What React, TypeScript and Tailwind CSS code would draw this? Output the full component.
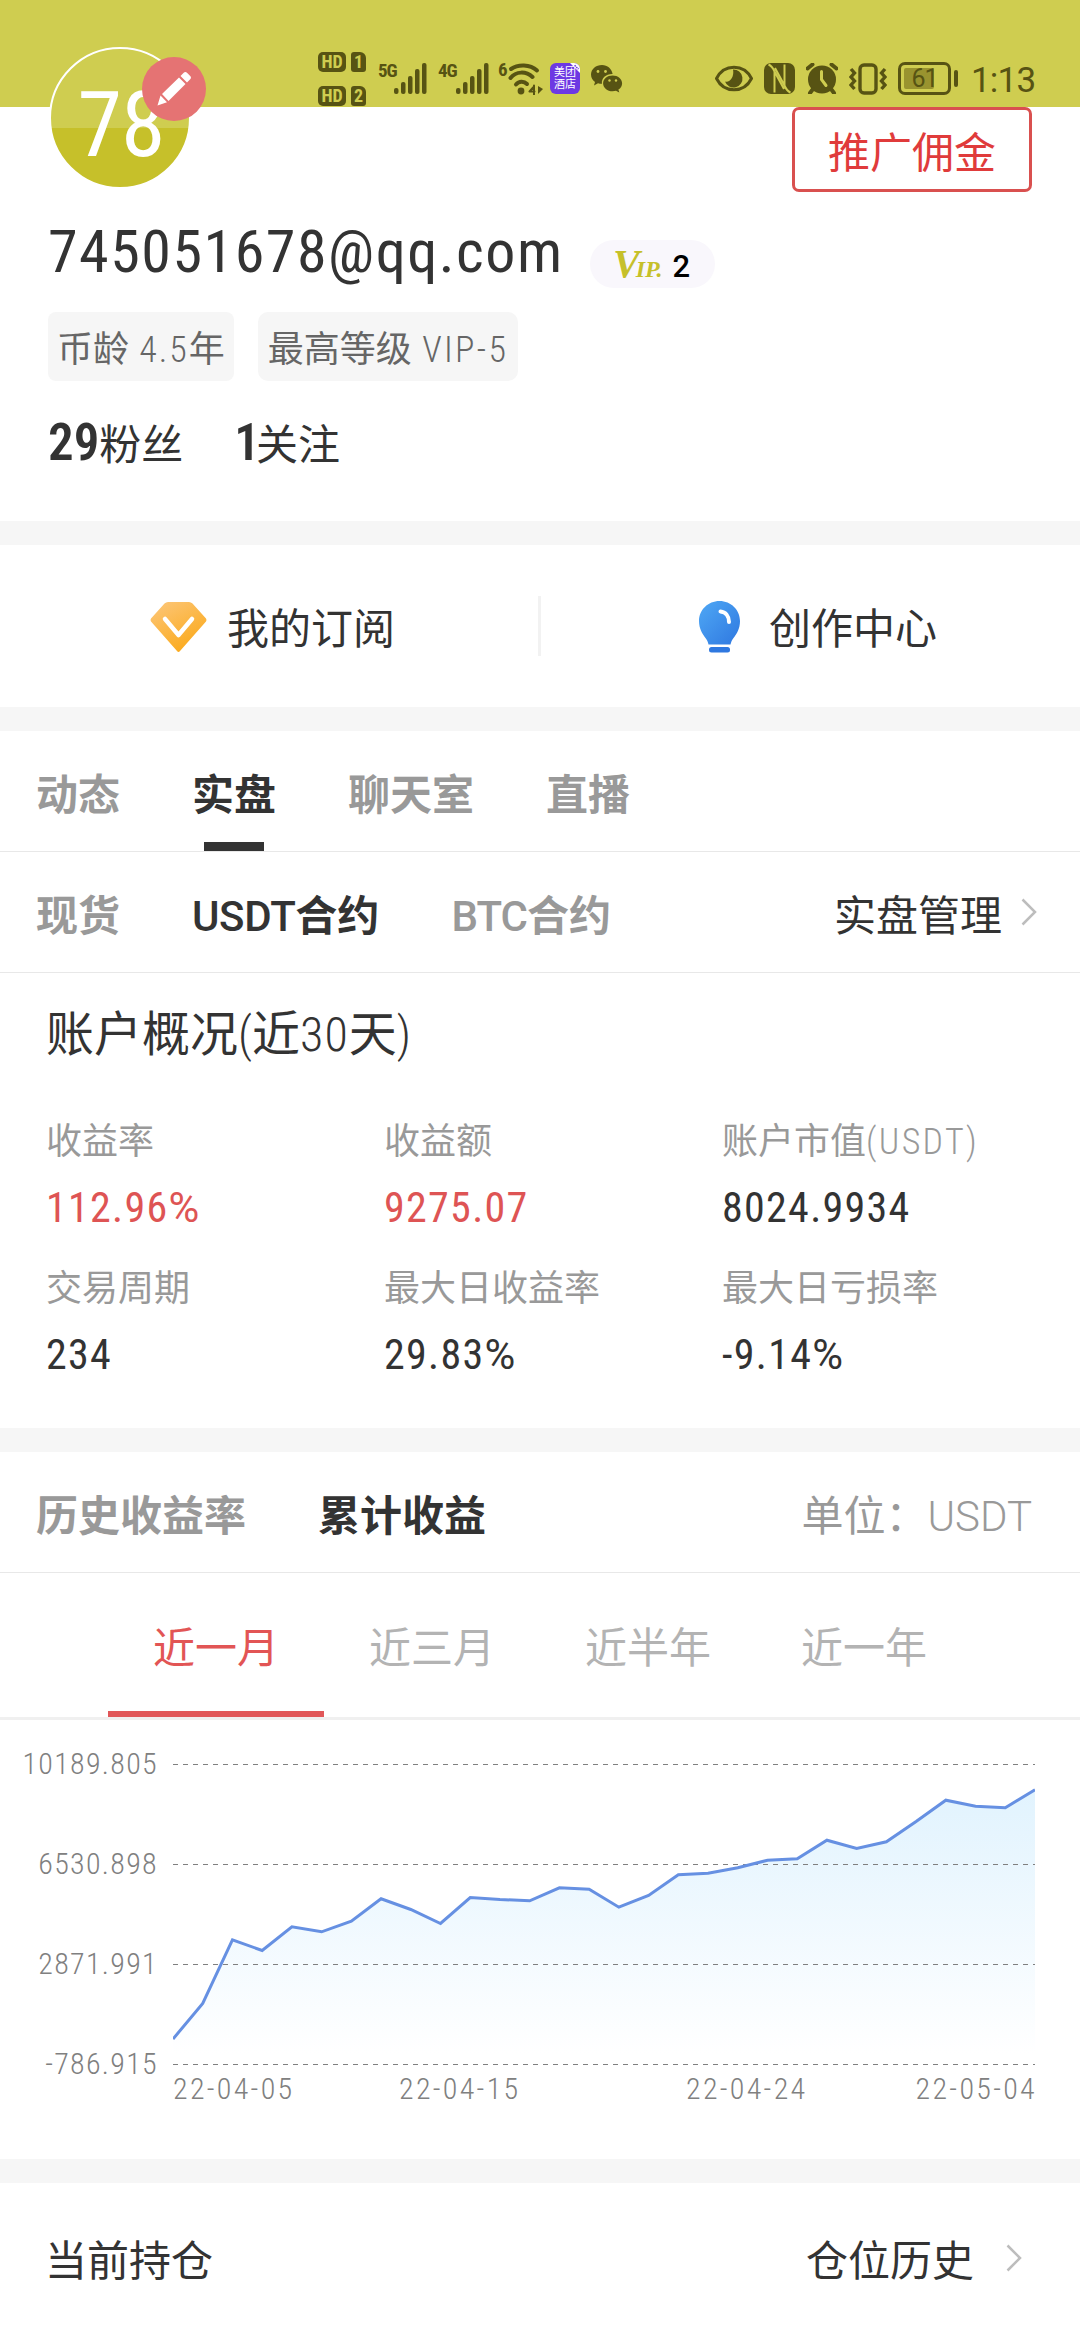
import React from 'react';

const stats = [
  { label: '收益率', value: '112.96', percent: true, red: true },
  { label: '收益额', value: '9275.07', red: true },
  { label: '账户市值', unit: '(USDT)', value: '8024.9934' },
  { label: '交易周期', value: '234' },
  { label: '最大日收益率', value: '29.83', percent: true },
  { label: '最大日亏损率', value: '-9.14', percent: true },
];

const periods = ['近一月', '近三月', '近半年', '近一年'];

const yLabels = ['10189.805', '6530.898', '2871.991', '-786.915'];

// y offsets inside the plot, one per day
const points = [
  275, 239.5, 175.8, 186.5, 162.8, 167.8, 157.2, 134.8, 145.5, 159.5,
  133.5, 135.5, 136.8, 123.8, 125.2, 143.2, 131.5, 110.8, 109.2, 103.8,
  96.2, 94.8, 76.2, 84.5, 77.8, 57.5, 36.2, 42.2, 43.8, 25.8,
];

const Signal = () => (
  <svg width="33" height="31" viewBox="0 0 33 31" fill="#575313">
    <rect x="0" y="25" width="4.5" height="6" rx="2" />
    <rect x="7" y="19" width="4.5" height="12" rx="2" />
    <rect x="14" y="13" width="4.5" height="18" rx="2" />
    <rect x="21" y="6" width="4.5" height="25" rx="2" />
    <rect x="28" y="0" width="4.5" height="31" rx="2" />
  </svg>
);

const HdBadge = ({ sim }: { sim: string }) => (
  <div className="flex gap-[5px] text-[#cfcd50] font-bold leading-none">
    <div className="w-[28px] h-[20px] rounded-[5px] bg-[#575313] flex items-center justify-center text-[18px] font-stretch-condensed">HD</div>
    <div className="w-[15px] h-[20px] rounded-[3px] rounded-tr-[6px] bg-[#575313] flex items-center justify-center text-[18px] font-stretch-condensed">{sim}</div>
  </div>
);

const StatusBar = () => (
  <div className="h-[107px] bg-[#cfcd50] pt-[51px] pl-[318px] text-[#575313]">
    <div className="h-[55px] flex items-center">
      <div className="w-[48px] flex flex-col gap-[14px]">
        <HdBadge sim="1" />
        <HdBadge sim="2" />
      </div>
      <span className="ml-3 w-[16px] text-[19px] font-bold leading-none font-stretch-condensed tracking-[-1px] mb-[16px]">5G</span>
      <Signal />
      <span className="ml-[11px] w-[18px] text-[19px] font-bold leading-none font-stretch-condensed tracking-[-1px] mb-[16px]">4G</span>
      <Signal />
      <span className="ml-[9px] w-[9px] text-[19px] font-bold leading-none font-stretch-condensed mb-[18px]">6</span>
      <svg width="37" height="32" viewBox="0 0 37 32" fill="none" stroke="#575313" strokeWidth="4" strokeLinecap="round">
        <path d="M4 6C11 1 23 1 30 7.500" />
        <path d="M3.500 15C9 8 19 8 25.500 14" />
        <path d="M9 21.500C12 18 17 18 20 21" />
        <circle cx="14" cy="28" r="3.400" fill="#575313" stroke="none" />
        <path d="M27 22.500v9M22.500 28.500l4.500-5M22.500 28.500h5" strokeWidth="2" />
        <path d="M31 23v8l5-5z" fill="#575313" stroke="none" />
      </svg>
      <div className="relative ml-[6px] w-[30px] h-[31px] rounded-[6px] bg-[#6d39e3] text-white text-[11px] leading-[12px] font-normal flex items-center justify-center text-center overflow-hidden">
        美团<br />酒店
        <svg className="absolute right-0 top-0" width="10" height="10" viewBox="0 0 13 13">
          <path d="M0 0h13v13z" fill="#fff" />
          <path d="M6 3l5 5" stroke="#6d39e3" strokeWidth="2" strokeDasharray="2 1" />
        </svg>
      </div>
      <svg className="ml-[11px]" width="32" height="28" viewBox="0 0 32 28" fill="#575313">
        <path d="M11 0C4.900 0 0 4.200 0 9.600c0 3 1.500 5.600 4 7.400l-1 3.500 4-2.200c1.300.4 2.600.5 4 .5-.9-5.400 4-9.900 10.600-9.700C20.900 3.800 16.400 0 11 0z" />
        <path d="M21.600 10.600c-5.300 0-9.500 3.500-9.500 7.800s4.200 7.800 9.500 7.800c1.200 0 2.300-.2 3.400-.5l3.300 1.900-.9-3c2.300-1.500 3.700-3.700 3.700-6.200 0-4.300-4.200-7.800-9.500-7.800z" />
        <g fill="#cfcd50"><circle cx="7" cy="6.500" r="1.400" /><circle cx="14.500" cy="6.500" r="1.400" /><circle cx="18.500" cy="15.500" r="1.200" /><circle cx="25" cy="15.500" r="1.200" /></g>
      </svg>
      <svg className="ml-[92px]" width="38" height="27" viewBox="0 0 38 27">
        <path d="M1.500 13.500C9-1.500 29-1.500 36.500 13.500 29 28.500 9 28.500 1.500 13.500z" fill="none" stroke="#575313" strokeWidth="3" />
        <path d="M18 4.500a9 9 0 1 1-8 12c5 1.500 9.500-5 8-12z" fill="#575313" />
      </svg>
      <svg className="ml-[11px]" width="31" height="31" viewBox="0 0 31 31">
        <rect width="31" height="31" rx="7" fill="#575313" />
        <path d="M10.500 29.500V8.500L20 26M20.500 1.500v21L11 5M10.500 8.500C9 5 7 2.500 4.500 1.500M20.500 22.500c1.500 3.500 3.500 6 6 7" fill="none" stroke="#cfcd50" strokeWidth="2" />
      </svg>
      <svg className="ml-[11px]" width="32" height="31" viewBox="0 0 32 31">
        <circle cx="16" cy="16.500" r="14" fill="#575313" />
        <path d="M1.500 5.500l5-4M30.500 5.500l-5-4M7 26l-3 4M25 26l3 4" stroke="#575313" strokeWidth="4" strokeLinecap="round" />
        <path d="M15.500 8.500v8l4.500 6" fill="none" stroke="#cfcd50" strokeWidth="3" strokeLinecap="round" />
      </svg>
      <svg className="ml-[11px]" width="38" height="32" viewBox="0 0 38 32" fill="none" stroke="#575313" strokeWidth="3.400">
        <rect x="11" y="2" width="16" height="28" rx="4" />
        <path d="M2 6l3.500 4-3.500 4 3.500 4-3.500 4 3.500 4M36 6l-3.500 4 3.500 4-3.500 4 3.500 4-3.500 4" />
      </svg>
      <div className="ml-[11px] w-[53px] h-[33px] rounded-[7px] border-3 border-[#575313] p-[3px] relative">
        <div className="w-[30px] h-full bg-[#99932f] rounded-[2px]" />
        <span className="absolute inset-0 flex items-center justify-center text-[25px] leading-none tracking-[-1px]">61</span>
      </div>
      <div className="ml-[3px] w-[4px] h-[17px] rounded-[2px] bg-[#575313]" />
      <span className="ml-[13px] pt-[3px] text-[35px] leading-none whitespace-nowrap tracking-[-0.8px]">1:13</span>
    </div>
  </div>
);

const Chevron = () => (
  <svg width="16" height="28" viewBox="0 0 16 28" fill="none" stroke="#bdbdbd" strokeWidth="2.500">
    <path d="M1.500 1.500L14 14 1.500 26.500" />
  </svg>
);

const Band = () => <div className="h-6 bg-[#f6f6f6]" />;

const Profile = () => (
  <div className="relative h-[414px] px-12">
    {/* avatar overlaps the status bar */}
    <div className="absolute left-[49px] top-[-60px] w-[142px] h-[142px]">
      <div className="w-full h-full rounded-full border-2 border-white bg-linear-to-b from-[#cfcd50] from-57% to-[#c6c02a] to-57% flex items-center justify-center pt-[15px] pl-[2px] text-white text-[90px] leading-none font-normal font-stretch-semi-condensed tracking-[-1px]">78</div>
      <div className="absolute left-[93px] top-[10px] w-[64px] h-[64px] rounded-full bg-[#e57373] flex items-center justify-center">
        <svg width="36" height="36" viewBox="0 0 36 36" fill="#fff">
          <path d="M1.500 34.500l3-10 6.500 6.800zM6 23L23 6.500l6.500 6.500L12.500 30zM24.500 5l3.200-3.200c1-1 2.300-1 3.300 0l3.200 3.200c1 1 1 2.200 0 3.200L31 11.500z" />
        </svg>
      </div>
    </div>
    <div className="flex justify-end">
      <button className="w-[240px] h-[85px] border-3 border-[#d9504f] rounded-[7px] text-[42px] text-[#e03b3b] leading-none pt-[8px]">推广佣金</button>
    </div>

    <div className="mt-[22px] flex items-center">
      <span className="text-[60px] leading-[76px] text-[#333] w-[542px] font-stretch-semi-condensed tracking-[1.500px]">745051678@qq.com</span>
      <div className="mt-[24px] w-[125px] h-12 rounded-full bg-[#f9f7fc] flex items-baseline pl-[23px] leading-[48px] text-[#c6c02a] font-['Liberation_Serif'] italic font-bold">
        <span className="text-[40px]">V</span>
        <span className="text-[24px] -ml-1">IP.</span>
        <span className="ml-[10px] text-[31px] text-black not-italic font-medium font-[Roboto]">2</span>
      </div>
    </div>

    <div className="mt-[22px] flex gap-6 text-[36px] leading-none text-[#666]">
      <div className="w-[186px] h-[69px] bg-[#f6f6f6] rounded-lg flex items-center justify-center pt-[6px] whitespace-nowrap">币龄<span className="font-light font-stretch-semi-condensed tracking-[2px]">&nbsp;4.5</span>年</div>
      <div className="w-[260px] h-[69px] bg-[#f6f6f6] rounded-[10px] flex items-center justify-center pt-[6px] whitespace-nowrap">最高等级<span className="font-light font-stretch-semi-condensed tracking-[2.300px]">&nbsp;VIP-5</span></div>
    </div>

    <div className="mt-[32px] flex gap-[51px] text-[42px] text-[#333] leading-[60px]">
      <div><span className="text-[51px] font-semibold font-stretch-condensed">29</span>粉丝</div>
      <div><span className="text-[51px] font-semibold font-stretch-condensed tracking-[-4px]">1</span>关注</div>
    </div>
  </div>
);

const Shortcuts = () => (
  <div className="h-[162px] flex items-center text-[42px] leading-none text-[#333]">
    <div className="w-[538px] pl-[150px] pt-[2px] flex items-center">
      <svg width="57" height="52" viewBox="0 0 57 52">
        <defs>
          <linearGradient id="gold" x1="0" y1="0" x2=".6" y2="1">
            <stop offset="0" stopColor="#fcc77c" />
            <stop offset="1" stopColor="#fbaa1c" />
          </linearGradient>
        </defs>
        <path d="M18 1h21q2 0 3.500 1.500L56 17.500q1 1.500 0 3L30 50q-1.500 2-3 0L1 20.500q-1-1.500 0-3L14.500 2.500Q16 1 18 1z" fill="url(#gold)" />
        <path d="M15 18l13.500 16L42 18" fill="none" stroke="#fff" strokeWidth="4.500" strokeLinecap="round" strokeLinejoin="round" />
      </svg>
      <span className="ml-[20px] pt-[5px]">我的订阅</span>
    </div>
    <div className="w-[3px] h-[60px] bg-[#f2f2f2]" />
    <div className="pl-[158px] pt-[2px] flex items-center">
      <svg width="41" height="52" viewBox="0 0 41 52">
        <defs>
          <linearGradient id="blue" x1="0" y1="0" x2="1" y2="1">
            <stop offset="0" stopColor="#4fa8f5" />
            <stop offset="1" stopColor="#2f78e0" />
          </linearGradient>
        </defs>
        <path d="M20.500 0C9 0 0 9 0 20c0 8 3.500 13 6.500 17 1.500 2 2.500 4 3 6.500h22c.5-2.500 1.500-4.500 3-6.500C37.500 33 41 28 41 20 41 9 32 0 20.500 0z" fill="url(#blue)" />
        <rect x="10" y="46" width="21" height="5.500" rx="2.500" fill="#2f78e0" />
        <path d="M21.500 10.500c5 .5 8.500 4.500 8.500 10.500" fill="none" stroke="#fff" strokeWidth="4" strokeLinecap="round" />
      </svg>
      <span className="ml-[29px] pt-[5px]">创作中心</span>
    </div>
  </div>
);

const Tabs = () => (
  <div className="text-[42px] leading-none text-[#999] font-bold">
    <div className="px-9 h-[121px] border-b border-[#e8e8e8] flex items-center gap-[72px]">
      <span className="pt-[9px]">动态</span>
      <span className="relative h-full flex items-center pt-[9px] text-[#333]">
        实盘
        <span className="absolute left-3 bottom-0 w-[60px] h-[9px] bg-[#333]" />
      </span>
      <span className="pt-[9px]">聊天室</span>
      <span className="pt-[9px]">直播</span>
    </div>
    <div className="px-9 h-[121px] border-b border-[#e8e8e8] flex items-center gap-[72px]">
      <span className="pt-[9px]">现货</span>
      <span className="pt-[9px] text-[#333]"><span className="font-medium tracking-[-0.4px]">USDT</span>合约</span>
      <span className="pt-[9px]"><span className="font-medium tracking-[-0.9px]">BTC</span>合约</span>
      <div className="ml-auto flex items-center text-[#333] font-normal">
        <span className="pt-[9px]">实盘管理</span>
        <span className="ml-[19px] mr-[7px]"><Chevron /></span>
      </div>
    </div>
  </div>
);

const Overview = () => (
  <div className="h-[455px] pt-[37px] pl-[46px]">
    <h3 className="text-[48px] leading-[50px] text-[#333]">
      账户概况<span className="font-light font-stretch-condensed">(</span>近
      <span className="font-light font-stretch-semi-condensed tracking-[1px]">30</span>天<span className="font-light font-stretch-condensed">)</span>
    </h3>
    <div className="mt-[52px] grid grid-cols-[338px_338px_1fr]">
      {stats.map((s) => (
        <div key={s.label} className="h-[147px]">
          <div className="text-[36px] leading-[61px] text-[#999]">
            {s.label}
            {s.unit && <span className="font-light font-stretch-semi-condensed tracking-[2.300px]">{s.unit}</span>}
          </div>
          <div className={`text-[42px] leading-[70px] font-stretch-semi-condensed tracking-[1.300px] ${s.red ? 'text-[#de5454]' : 'text-[#333]'}`}>
            {s.value}
            {s.percent && <span className="font-stretch-normal">%</span>}
          </div>
        </div>
      ))}
    </div>
  </div>
);

const Plot = () => {
  const step = 862 / (points.length - 1);
  const line = points.map((y, i) => `${i * step},${y}`).join(' ');
  return (
    <svg width="862" height="302" viewBox="0 0 862 302">
      <defs>
        <linearGradient id="area" gradientUnits="userSpaceOnUse" x1="0" y1="25" x2="0" y2="290">
          <stop offset="0" stopColor="#e1f3fe" />
          <stop offset="1" stopColor="#ffffff" />
        </linearGradient>
      </defs>
      <polygon points={`0,300 ${line} 862,300`} fill="url(#area)" />
      {[0.5, 100.5, 200.5, 300.5].map((y) => (
        <line key={y} x1="0" x2="862" y1={y} y2={y} stroke="#808080" strokeDasharray="5 5" />
      ))}
      <polyline points={line} fill="none" stroke="#6690e2" strokeWidth="3" />
    </svg>
  );
};

const Earnings = () => (
  <div className="h-[707px]">
    <div className="h-[121px] px-9 border-b border-[#e8e8e8] flex items-center gap-[72px] text-[42px] leading-none text-[#999]">
      <span className="pt-[9px] font-bold">历史收益率</span>
      <span className="pt-[9px] font-bold text-[#333]">累计收益</span>
      <span className="pt-[9px] ml-auto mr-3">单位：<span className="font-light">USDT</span></span>
    </div>
    <div className="h-[147px] px-[108px] border-b-3 border-[#f0f0f0] flex">
      {periods.map((p, i) => (
        <div
          key={p}
          className={`w-[216px] flex items-center justify-center pt-[13px] text-[42px] leading-none border-b-6 ${i === 0 ? 'text-[#e25555] border-[#e15759]' : 'text-[#b3b3b3] border-transparent'}`}
        >
          {p}
        </div>
      ))}
    </div>
    <div className="pt-[44px] flex">
      <div className="w-[158px] -mt-5 flex flex-col text-right text-[30px] leading-[40px] gap-[60px] text-[#808080] font-light font-stretch-semi-condensed tracking-[1.300px]">
        {yLabels.map((l) => <span key={l}>{l}</span>)}
      </div>
      <div className="ml-[15px] w-[862px]">
        <Plot />
        <div className="mt-[3px] -mr-[2px] flex text-[30px] leading-[40px] text-[#808080] font-light font-stretch-semi-condensed tracking-[2.300px]">
          <span className="w-[226px]">22-04-05</span>
          <span className="w-[287px]">22-04-15</span>
          <span>22-04-24</span>
          <span className="ml-auto">22-05-04</span>
        </div>
      </div>
    </div>
  </div>
);

const App = () => {
  return (
    <div className="w-[1080px] h-[2340px] overflow-hidden bg-white font-[Roboto,'Noto_Sans_CJK_SC',sans-serif]">
      <StatusBar />
      <Profile />
      <Band />
      <Shortcuts />
      <Band />
      <Tabs />
      <Overview />
      <Band />
      <Earnings />
      <Band />
      <div className="h-[150px] pl-[45px] pr-[58px] flex items-center justify-between text-[42px] leading-none text-[#333]">
        <span className="pt-[8px]">当前持仓</span>
        <div className="flex items-center gap-[32px]">
          <span className="pt-[8px]">仓位历史</span>
          <Chevron />
        </div>
      </div>
    </div>
  );
};

export default App;
